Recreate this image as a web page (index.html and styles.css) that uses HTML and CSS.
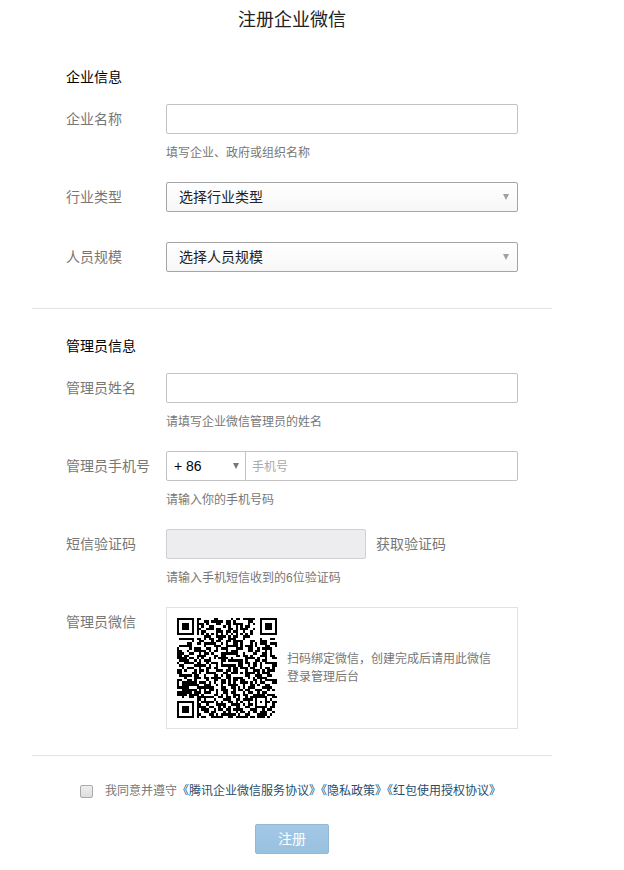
FILE: index.html
```html
<!DOCTYPE html>
<html lang="zh-CN">
<head>
    <meta charset="UTF-8">
    <meta name="viewport" content="width=device-width, initial-scale=1.0">
    <link rel="stylesheet" href="styles.css">
    <title>注册企业微信</title>
</head>
<body>
    <form class="register">
        <h1>注册企业微信</h1>

        <!-- 企业信息 -->
        <section class="section section_corp">
            <h2>企业信息</h2>
            <div class="row">
                <label class="row__label" for="corpName">企业名称</label>
                <div class="row__content">
                    <input class="input" type="text" id="corpName">
                    <p class="hint">填写企业、政府或组织名称</p>
                </div>
            </div>
            <div class="row row_select">
                <label class="row__label" for="industry">行业类型</label>
                <div class="row__content select">
                    <select id="industry">
                        <option>选择行业类型</option>
                    </select>
                </div>
            </div>
            <div class="row row_select">
                <label class="row__label" for="scale">人员规模</label>
                <div class="row__content select">
                    <select id="scale">
                        <option>选择人员规模</option>
                    </select>
                </div>
            </div>
        </section>

        <!-- 管理员信息 -->
        <section class="section section_admin">
            <h2>管理员信息</h2>
            <div class="row">
                <label class="row__label" for="adminName">管理员姓名</label>
                <div class="row__content">
                    <input class="input" type="text" id="adminName">
                    <p class="hint">请填写企业微信管理员的姓名</p>
                </div>
            </div>
            <div class="row">
                <label class="row__label" for="phone">管理员手机号</label>
                <div class="row__content">
                    <div class="phone">
                        <div class="select select_area">
                            <select aria-label="区号">
                                <option>+ 86</option>
                            </select>
                        </div>
                        <input class="input" type="tel" id="phone" placeholder="手机号">
                    </div>
                    <p class="hint">请输入你的手机号码</p>
                </div>
            </div>
            <div class="row">
                <label class="row__label" for="smsCode">短信验证码</label>
                <div class="row__content">
                    <div class="sms">
                        <input class="input" type="text" id="smsCode" disabled>
                        <button class="sms__btn" type="button">获取验证码</button>
                    </div>
                    <p class="hint">请输入手机短信收到的6位验证码</p>
                </div>
            </div>
            <div class="row">
                <span class="row__label">管理员微信</span>
                <div class="row__content qrcode">
                    <svg class="qrcode__img" viewBox="0 0 41 41" role="img" aria-label="二维码" shape-rendering="crispEdges">
                        <path id="qrData" fill="#000"/>
                        <path fill="#fff" d="M0 0h8v8h-8zM33 0h8v8h-8zM0 33h8v8h-8zM32 32h5v5h-5z"/>
                        <path fill="#000" fill-rule="evenodd" d="M0 0h7v7h-7zM1 1v5h5v-5zM2 2h3v3h-3zM34 0h7v7h-7zM35 1v5h5v-5zM36 2h3v3h-3zM0 34h7v7h-7zM1 35v5h5v-5zM2 36h3v3h-3zM32 32h5v5h-5zM33 33v3h3v-3zM34 34h1v1h-1z"/>
                    </svg>
                    <p class="qrcode__text">扫码绑定微信，创建完成后请用此微信<br>登录管理后台</p>
                </div>
            </div>
        </section>

        <div class="agree">
            <input type="checkbox" id="agree">
            <label for="agree">我同意并遵守</label>
            <a href="#">《腾讯企业微信服务协议》</a>
            <a href="#">《隐私政策》</a>
            <a href="#">《红包使用授权协议》</a>
        </div>
        <button class="submit" type="submit">注册</button>
    </form>

    <script>
        // 二维码数据，每个 # 为一个黑色模块
        const rows = [
            '........##.....##.....#.##.#####.........',
            '........#..##.#####.##.#.....##..........',
            '........###.#...##..##.####..#.#.........',
            '........#.#..##....#.#..#.#.##...........',
            '........##..###.##...##.#.###..#.........',
            '........#.##....###.##.##..#..#..........',
            '........#.#.#.#.#.#.#.#.#.#.#.#..........',
            '...........###..####.#.##..###...........',
            '.######.##.#.##..##..###...#......#...##.',
            '......#..##...#.##..##.####...##..###....',
            '....##..##.#####..#.#..##.#...#.#.###.###',
            '.#####.....#...###..#####.#.###.#...##..#',
            '#....#.###..##..#.###...###..##..#.####..',
            '##..#..#####.#.##...#.###....##.##..#.#..',
            '###..##..#.##.#...#######..#...##..##.#..',
            '##.##...####...##.##....##.##.#...###.##.',
            '####.##.#.#..#.#.####.#.....####.#..#..##',
            '.####..#.#.###....##.######.#...##.##....',
            '#..####.##..#.###.#......##.##.##.#.#####',
            '.##....#####.#..#.######.##..#.##.#....##',
            '..#.###..#..##.##....#.##.###.##..#.##.#.',
            '##.#...#.##.#...###.##.##...#..###.#.###.',
            '##....##.#..####...##.###.#.####.#.###...',
            '.#####.##..#...##.#.##......##..###..##..',
            '...#...###.##.####..##.####..#.#.####....',
            '##..##.#....#..##.##.#.##.##...##.#.#####',
            '#.######.###.#.#..##.#.#..###.#.#.##...##',
            '#.#######..###..#.#..####..#..##.#..##...',
            '#####...#######...##..##.#.#.###...####..',
            '..######.#.#.##.#.###..#.##.##..###..#.#.',
            '######.###.###..#..##.##...#.##..#.##....',
            '####.####.#....##.#.#..###.##..#####.###.',
            '..#..##.#######..##.##.#.#..#.#######..##',
            '........##.#...#...###..##.####.#...#.#..',
            '........#.#####.#.#..##.#.#..#..#.#.##.##',
            '........##..#...####..####.#.##.#...#..#.',
            '........####.##..#.#.#..##..##..#####.##.',
            '........#.###..#.##.##.####...###..#.##..',
            '........#..##.##...#.#..#.##.#.##.###..#.',
            '........##...##.#.######.#..##...####.#..',
            '........#.##..#####..##.#####.##.###.#...'
        ];

        let d = '';
        rows.forEach((row, y) => {
            [...row].forEach((cell, x) => {
                if (cell === '#') d += `M${x} ${y}h1v1h-1z`;
            });
        });
        document.getElementById('qrData').setAttribute('d', d);
    </script>
</body>
</html>
```

FILE: styles.css
```css
* {
    box-sizing: border-box;
}

body {
    font-family: "Liberation Sans", "Noto Sans CJK SC", sans-serif;
    font-size: 14px;
    line-height: 20px;
    background-color: #fff;
    margin: 0;
    color: #777;
}

h1, h2, p {
    margin: 0;
    font-weight: normal;
}

/* 表单容器 */
.register {
    max-width: 640px;
    margin: 0 72px 0 32px;
    padding: 8px 0 16px;
}

h1 {
    font-size: 18px;
    line-height: 24px;
    text-align: center;
    color: #222;
    margin-bottom: 35px;
}

h2 {
    font-size: 14px;
    color: #000;
    margin-bottom: 17px;
}

.section {
    padding: 0 34px;
    border-bottom: 1px solid #e2e2e2;
}

.section_corp {
    padding-bottom: 36px;
}

.section_admin {
    padding-top: 27px;
    padding-bottom: 26px;
}

/* 表单行 */
.row {
    display: flex;
    margin-bottom: 20px;
}

.row_select {
    margin-bottom: 30px;
}

.row:last-child {
    margin-bottom: 0;
}

.row__label {
    flex: 0 0 100px;
    line-height: 30px;
}

.row__content {
    flex: 1;
    min-width: 0;
}

.hint {
    font-size: 12px;
    line-height: 18px;
    margin-top: 10px;
}

.input {
    display: block;
    width: 100%;
    height: 30px;
    padding: 0 6px;
    border: 1px solid #c3c3c3;
    border-radius: 2px;
    font-family: inherit;
    font-size: 14px;
    background: #fff;
}

.input::placeholder {
    font-size: 12px;
    color: #aaa;
}

.input:disabled {
    background: #ededf0;
    border-color: #d0d0d3;
}

/* 下拉框 */
.select {
    position: relative;
}

.select select {
    display: block;
    appearance: none;
    width: 100%;
    height: 30px;
    padding: 0 12px;
    border: 1px solid #a5a5a5;
    border-radius: 2px;
    background: linear-gradient(#fff, #f7f7f7);
    color: #222;
    font-family: inherit;
    font-size: 14px;
}

.select::after {
    content: "";
    position: absolute;
    top: 12px;
    right: 9px;
    border: 3px solid transparent;
    border-top: 6px solid #a0a0a0;
    border-bottom: 0;
    pointer-events: none;
}

/* 手机号 */
.phone {
    display: flex;
}

.select_area {
    flex: 0 0 80px;
}

.select_area select {
    padding: 0 7px;
    border-color: #c3c3c3;
    border-radius: 2px 0 0 2px;
    background: #fff;
    color: #000;
}

.select_area::after {
    right: 7px;
    border-top-color: #777;
}

.phone .input {
    flex: 1;
    min-width: 0;
    margin-left: -1px;
    border-radius: 0 2px 2px 0;
}

/* 短信验证码 */
.sms {
    display: flex;
    gap: 10px;
}

.sms .input {
    flex: 0 1 200px;
    min-width: 0;
}

.sms__btn {
    padding: 0;
    border: none;
    background: none;
    color: #777;
    font-family: inherit;
    font-size: 14px;
    line-height: 20px;
    white-space: nowrap;
    cursor: pointer;
}

/* 二维码 */
.qrcode {
    display: flex;
    align-items: center;
    gap: 10px;
    padding: 10px;
    border: 1px solid #e2e2e2;
}

.qrcode__img {
    flex: none;
    width: 100px;
    height: 100px;
}

.qrcode__text {
    font-size: 12px;
    line-height: 18px;
}

/* 协议 */
.agree {
    display: flex;
    flex-wrap: wrap;
    align-items: center;
    column-gap: 6px;
    margin: 26px 0 24px;
    padding-left: 48px;
    font-size: 12px;
    line-height: 18px;
}

.agree input {
    appearance: none;
    width: 13px;
    height: 13px;
    margin: 0 6px 0 0;
    border: 1px solid #aaa;
    border-radius: 2px;
    background: linear-gradient(#eee, #ddd);
}

.agree input:checked {
    background: #95bfdf;
}

/* 书名号使用半宽字形 */
.agree a {
    color: #1f4e6e;
    font-feature-settings: "halt";
    text-decoration: none;
}

.submit {
    display: block;
    height: 30px;
    margin: 0 auto;
    padding: 0 22px;
    border: 1px solid #92b8d6;
    border-radius: 2px;
    background: linear-gradient(#a3c8e6, #98c0df);
    color: #fff;
    font-family: inherit;
    font-size: 14px;
    line-height: 20px;
    cursor: pointer;
}
```
